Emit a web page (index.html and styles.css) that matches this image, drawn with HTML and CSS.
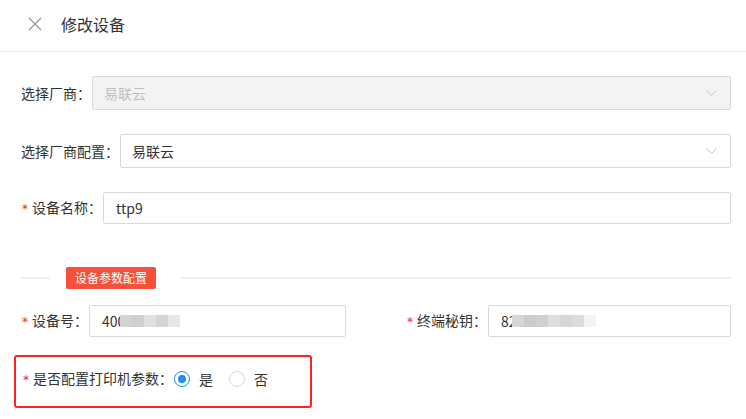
FILE: index.html
```html
<!DOCTYPE html>
<html lang="zh-CN">
<head>
    <meta charset="UTF-8">
    <meta name="viewport" content="width=device-width, initial-scale=1.0">
    <title>修改设备</title>
    <link rel="stylesheet" href="styles.css">
</head>
<body>

    <div class="header">
        <svg class="close" width="14" height="14" viewBox="0 0 14 14">
            <path d="M1 1 L13 13 M13 1 L1 13" stroke="#999" stroke-width="1.4" fill="none"/>
        </svg>
        <span class="title">修改设备</span>
    </div>

    <div class="form">
        <div class="row">
            <label class="label">选择厂商：</label>
            <div class="input select disabled">
                <span>易联云</span>
                <svg class="arrow" width="11" height="7" viewBox="0 0 11 7"><path d="M0.5 0.5 L5.5 5.5 L10.5 0.5" stroke="#c0c0c0" fill="none"/></svg>
            </div>
        </div>

        <div class="row">
            <label class="label">选择厂商配置：</label>
            <div class="input select">
                <span>易联云</span>
                <svg class="arrow" width="11" height="7" viewBox="0 0 11 7"><path d="M0.5 0.5 L5.5 5.5 L10.5 0.5" stroke="#c0c0c0" fill="none"/></svg>
            </div>
        </div>

        <div class="row">
            <label class="label"><i class="star">*</i>设备名称：</label>
            <div class="input short">ttp9</div>
        </div>

        <div class="divider">
            <span class="line first"></span>
            <span class="badge">设备参数配置</span>
            <span class="line"></span>
        </div>

        <div class="cols">
            <div class="row">
                <label class="label"><i class="star">*</i>设备号：</label>
                <div class="input short">400<span class="mosaic">
                    <b style="background:#d3d3d3"></b><b style="background:#cfcfcf"></b><b style="background:#e0e0e0"></b><b style="background:#d4d4d4"></b><b style="background:#e6e6e6"></b>
                </span></div>
            </div>
            <div class="row">
                <label class="label"><i class="star">*</i>终端秘钥：</label>
                <div class="input short">82<span class="mosaic">
                    <b style="background:#d6d6d6"></b><b style="background:#cdcbcd"></b><b style="background:#d2d0d2"></b><b style="background:#dedede"></b><b style="background:#d6d6d6"></b><b style="background:#dcdcdc"></b><b style="background:#f3f3f3"></b>
                </span></div>
            </div>
        </div>

        <div class="mark">
            <div class="radio-row">
                <label class="label"><i class="star">*</i>是否配置打印机参数：</label>
                <span class="radio checked"></span><span class="option">是</span>
                <span class="radio"></span><span class="option">否</span>
            </div>
        </div>
    </div>

</body>
</html>
```

FILE: styles.css
```css
body {
    margin: 0;
    background: #fff;
    font-family: "Noto Sans CJK SC", "Microsoft YaHei", sans-serif;
    font-size: 14px;
    color: #333;
}
.header {
    height: 51px;
    display: flex;
    align-items: center;
    padding-left: 28px;
    border-bottom: 1px solid #ebebeb;
}
.close {
    margin-top: -4px;
}
.title {
    margin-left: 19px;
    font-size: 16px;
    color: #333;
    line-height: 20px;
    margin-top: -4px;
}
.form {
    padding: 24px 15px 0 21px;
}
.row {
    display: flex;
    align-items: center;
    margin-bottom: 24px;
}
.label {
    line-height: 20px;
    color: #333;
    margin-right: 1px;
    white-space: nowrap;
}
.star {
    font-style: normal;
    color: #f5222d;
    font-family: "DejaVu Sans", sans-serif;
    font-size: 12px;
    margin-right: 4px;
    margin-left: 1px;
}
.input {
    flex: 1;
    height: 34px;
    box-sizing: border-box;
    border: 1px solid #d9d9d9;
    border-radius: 2px;
    display: flex;
    align-items: center;
    padding-left: 11px;
    line-height: 20px;
    color: #333;
}
.input.short {
    height: 32px;
    padding-left: 12px;
}
.select {
    justify-content: space-between;
    padding-right: 13px;
}
.select.disabled {
    background: #f3f3f3;
    color: #bfbfbf;
}
.arrow {
    margin-top: 1px;
}
.divider {
    display: flex;
    align-items: center;
    margin-top: 43px;
    height: 22px;
}
.line {
    flex: 1;
    height: 2px;
    background: #f0f0f0;
}
.line.first {
    flex: none;
    width: 29px;
    margin-right: 16px;
}
.badge {
    background: #f4503b;
    color: #fff;
    font-size: 12px;
    line-height: 22px;
    padding: 0 9px;
    border-radius: 2px;
    margin-right: 24px;
}
.cols {
    display: grid;
    grid-template-columns: 1fr 1fr;
    column-gap: 60px;
    margin-top: 16px;
}
.cols .row {
    margin-bottom: 18px;
}
.cols .input {
    height: 32px;
}
.mosaic {
    display: flex;
    height: 12px;
    margin-bottom: 1px;
    margin-left: -5px;
}
.mosaic b {
    width: 12px;
    height: 12px;
}
.mark {
    width: 294px;
    height: 49px;
    margin-left: -7px;
    border: 2px solid #ff2222;
    border-radius: 3px;
    box-sizing: content-box;
}
.radio-row {
    display: flex;
    align-items: center;
    padding: 11px 0 0 6px;
}
.radio {
    width: 16px;
    height: 16px;
    box-sizing: border-box;
    border: 1px solid #d9d9d9;
    border-radius: 50%;
    position: relative;
}
.radio.checked {
    border-color: #1890ff;
}
.radio.checked::after {
    content: "";
    position: absolute;
    left: 3px;
    top: 3px;
    width: 8px;
    height: 8px;
    border-radius: 50%;
    background: #1890ff;
}
.option {
    margin-left: 9px;
    margin-right: 16px;
    line-height: 20px;
}
```
